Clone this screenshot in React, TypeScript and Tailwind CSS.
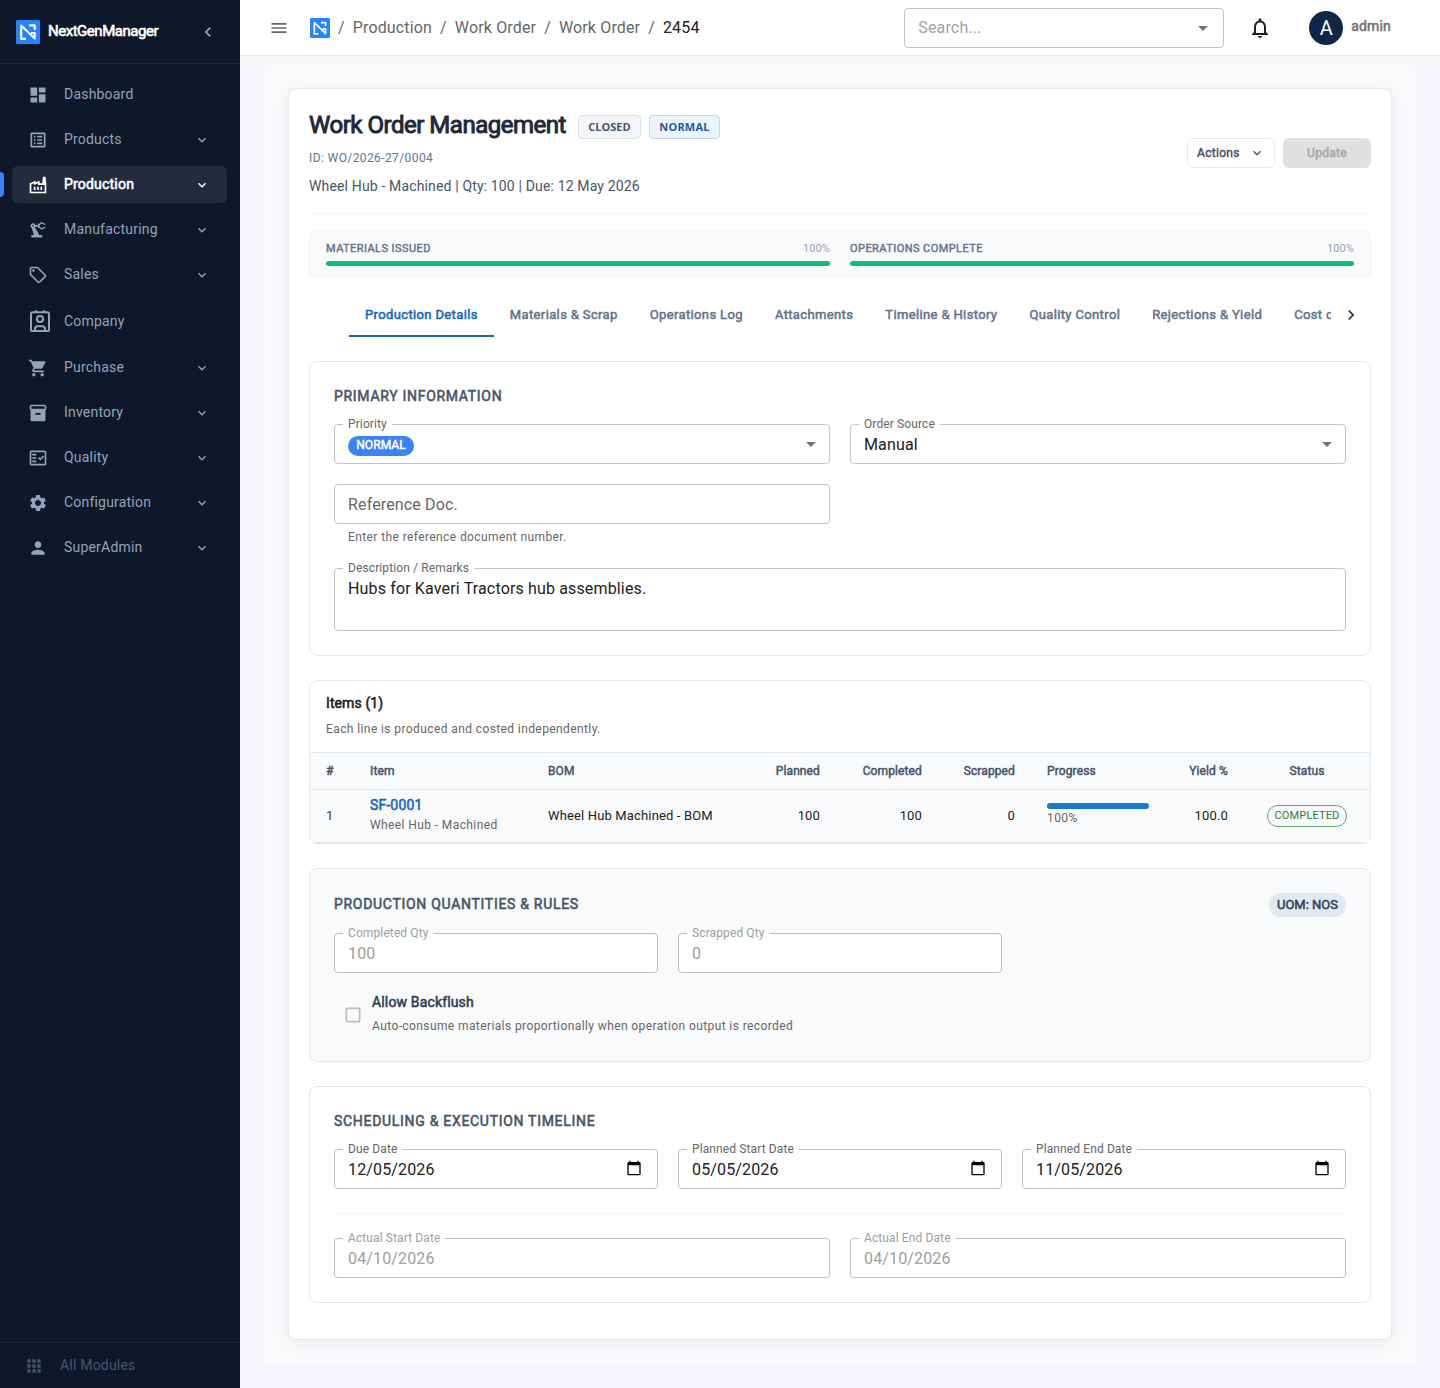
import React from "react";
import clsx from "clsx";
import type { IconType } from "react-icons";
import {
  MdApps,
  MdArrowDropDown,
  MdCalendarToday,
  MdCheckBoxOutlineBlank,
  MdChevronLeft,
  MdDashboard,
  MdInventory2,
  MdKeyboardArrowDown,
  MdKeyboardArrowRight,
  MdListAlt,
  MdMenu,
  MdNotificationsNone,
  MdOutlineFactCheck,
  MdOutlineFactory,
  MdOutlineLocalOffer,
  MdPerson,
  MdPrecisionManufacturing,
  MdSettings,
  MdShoppingCart,
} from "react-icons/md";

// heavier headings: the regular face thickened with a thin stroke
const bold = "[-webkit-text-stroke:0.04em_currentColor]";

function Logo({ size }: { size: number }) {
  return (
    <svg width={size} height={size} viewBox="0 0 24 24" className="shrink-0">
      <rect width="24" height="24" rx="1.5" fill="#2684ff" />
      <path
        d="M10 18.9H5.2V5.6L18.7 18.6V13H15.2M13.2 5.4h5.5V10"
        fill="none"
        stroke="#fff"
        strokeWidth="2.1"
        strokeLinejoin="round"
      />
    </svg>
  );
}

function CompanyIcon() {
  return (
    <svg
      width="24"
      height="24"
      viewBox="0 0 24 24"
      fill="none"
      stroke="currentColor"
      strokeWidth="2"
      className="shrink-0"
    >
      <rect x="3" y="3.3" width="18" height="18.7" rx="1.6" />
      <path d="M8 1.2v2.4M16 1.2v2.4" />
      <circle cx="12" cy="10" r="3.1" />
      <path d="M7 22v-2.2q0-2.6 2.6-2.6h4.8q2.6 0 2.6 2.6V22" />
    </svg>
  );
}

type NavItem = { label: string; icon?: IconType; expandable?: boolean; active?: boolean };

const navItems: NavItem[] = [
  { label: "Dashboard", icon: MdDashboard },
  { label: "Products", icon: MdListAlt, expandable: true },
  { label: "Production", icon: MdOutlineFactory, expandable: true, active: true },
  { label: "Manufacturing", icon: MdPrecisionManufacturing, expandable: true },
  { label: "Sales", icon: MdOutlineLocalOffer, expandable: true },
  { label: "Company" },
  { label: "Purchase", icon: MdShoppingCart, expandable: true },
  { label: "Inventory", icon: MdInventory2, expandable: true },
  { label: "Quality", icon: MdOutlineFactCheck, expandable: true },
  { label: "Configuration", icon: MdSettings, expandable: true },
  { label: "SuperAdmin", icon: MdPerson, expandable: true },
];

function Sidebar() {
  return (
    <aside className="flex w-60 shrink-0 flex-col bg-[#0f172a] text-[#94a3b8]">
      <div className="flex h-16 items-center border-b border-[#1b2436] pl-4 pr-[22px]">
        <Logo size={24} />
        <span className={clsx("ml-2 flex-1 text-[15px] tracking-[-0.47px] text-white", bold)}>
          NextGenManager
        </span>
        <MdChevronLeft size={20} />
      </div>
      <nav className="flex flex-1 flex-col gap-2 pt-3">
        {navItems.map(({ label, icon: Icon, expandable, active }) => (
          <div
            key={label}
            className={clsx(
              "relative ml-3 mr-[13px] flex items-center rounded-md pl-4 pr-[17px]",
              Icon ? "h-[37px]" : "h-10",
              active && "bg-[#242b3c] text-white"
            )}
          >
            {active && (
              <span className="absolute -left-3 top-1.5 h-[25px] w-1 rounded-r bg-[#3b82f6]" />
            )}
            <span className="flex w-9 items-center">
              {Icon ? <Icon size={20} /> : <CompanyIcon />}
            </span>
            <span
              className={clsx(
                "flex-1 text-sm tracking-[0.2px]",
                Icon && "pb-0.5",
                active && bold
              )}
            >
              {label}
            </span>
            {expandable && <MdKeyboardArrowDown size={16} />}
          </div>
        ))}
      </nav>
      <div className="flex h-[46px] items-center border-t border-[#1b2436] pl-6 text-[#475569]">
        <MdApps size={20} />
        <span className="ml-4 pb-0.5 text-sm tracking-[0.2px]">All Modules</span>
      </div>
    </aside>
  );
}

function Topbar() {
  const crumbs = ["Production", "Work Order", "Work Order"];
  return (
    <header className="flex h-14 items-center border-b border-[#e2e8f0] bg-white pl-[29px]">
      <MdMenu size={20} className="text-[#666]" />
      <div className="ml-[21px] flex flex-1 items-center gap-2 text-base tracking-[0.15px] text-[#666]">
        <Logo size={20} />
        {crumbs.map((crumb, i) => (
          <React.Fragment key={i}>
            <span>/</span>
            <span>{crumb}</span>
          </React.Fragment>
        ))}
        <span>/</span>
        <span className="text-[#212121]">2454</span>
      </div>
      <div className="flex h-10 w-80 items-center rounded border border-[#c4c4c4] pl-[13px] pr-2">
        <span className="flex-1 text-base tracking-[0.15px] text-[#a2a2a2]">Search...</span>
        <MdArrowDropDown size={24} className="text-[#757575]" />
      </div>
      <MdNotificationsNone size={24} className="ml-6 text-[#212121]" />
      <div className="ml-[37px] flex size-[34px] items-center justify-center rounded-full bg-[#0f2744] text-xl text-white">
        A
      </div>
      <span className={clsx("ml-2 mr-[49px] pb-[3px] text-sm tracking-[0.15px] text-[#757575]", bold)}>
        admin
      </span>
    </header>
  );
}

type FieldProps = {
  label?: string;
  disabled?: boolean;
  className?: string;
  children?: React.ReactNode;
  adornment?: React.ReactNode;
};

function Field({ label, disabled, className, children, adornment }: FieldProps) {
  return (
    <div
      className={clsx(
        "relative flex rounded bg-white px-3.5 text-base tracking-[0.15px]",
        disabled ? "text-[#9e9e9e]" : "text-[#212121]",
        className ?? "h-10 items-center"
      )}
    >
      <fieldset
        className={clsx(
          "absolute inset-x-0 bottom-0 rounded border px-2",
          disabled ? "border-[#bdbdbd]" : "border-[#c4c4c4]",
          label ? "-top-[5px]" : "top-0"
        )}
      >
        {label && (
          <legend
            className={clsx(
              "h-[11px] px-[5px] text-xs leading-[11px] tracking-[0.11px]",
              disabled ? "text-[#9e9e9e]" : "text-[#666]"
            )}
          >
            {label}
          </legend>
        )}
      </fieldset>
      <span className="flex-1 pt-0.5">{children}</span>
      {adornment}
    </div>
  );
}

const dropdown = <MdArrowDropDown size={24} className="-mr-[7px] text-[#757575]" />;
const calendar = <MdCalendarToday size={16} className="mr-0.5 -mt-0.5 text-black" />;

function SectionTitle({ children }: { children: React.ReactNode }) {
  return (
    <h2 className={clsx("pb-0.5 text-sm leading-5 tracking-[0.7px] text-[#475569]", bold)}>
      {children}
    </h2>
  );
}

function Meter({ label }: { label: string }) {
  return (
    <div className="flex-1">
      <div className="flex h-[18px] items-center justify-between pt-0.5 text-[11px]">
        <span className={clsx("tracking-[0.44px] text-[#64748b]", bold)}>{label}</span>
        <span className="tracking-[0.1px] text-[#94a3b8]">100%</span>
      </div>
      <div className="mt-1 h-[5px] rounded-full bg-[#10b981]" />
    </div>
  );
}

const tabs = [
  "Production Details",
  "Materials & Scrap",
  "Operations Log",
  "Attachments",
  "Timeline & History",
  "Quality Control",
  "Rejections & Yield",
  "Cost of Production",
];

function PageHeader() {
  return (
    <div className="flex items-center justify-between border-b border-[#f1f5f9] pb-[17px]">
      <div>
        <div className="flex h-9 items-center">
          <h1 className={clsx("text-2xl tracking-[-0.48px] text-[#1e293b]", bold)}>
            Work Order Management
          </h1>
          <span className="ml-3 mt-1 flex h-6 w-[63px] items-center justify-center rounded border border-[#dbe2ea] bg-[#f3f5f8] font-['Open_Sans'] text-[11px] font-bold text-[#475569]">
            CLOSED
          </span>
          <span className="ml-2 mt-1 flex h-6 w-[71px] items-center justify-center rounded border border-[#bfd7f0] bg-[#ebf3fc] font-['Open_Sans'] text-[11px] font-bold tracking-[0.2px] text-[#1e5a9c]">
            NORMAL
          </span>
        </div>
        <p className="mt-[5px] text-xs leading-5 tracking-[0.4px] text-[#64748b]">
          ID: WO/2026-27/0004
        </p>
        <p className="mt-2 text-sm leading-5 tracking-[0.15px] text-[#475569]">
          Wheel Hub - Machined | Qty: 100 | Due: 12 May 2026
        </p>
      </div>
      <div className="mt-0.5 flex gap-2 text-xs">
        <button className="flex h-[30px] w-[88px] items-center justify-between rounded-md border border-[#e2e8f0] px-[9px] text-[#475569]">
          <span className={clsx("tracking-[0.3px]", bold)}>Actions</span>
          <MdKeyboardArrowDown size={16} />
        </button>
        <button
          className={clsx("h-[30px] w-[88px] rounded-md bg-[#e0e0e0] tracking-[0.3px] text-[#a6a6a6]", bold)}
        >
          Update
        </button>
      </div>
    </div>
  );
}

function ItemsTable() {
  const th = "font-normal px-4";
  return (
    <section className="mt-6 overflow-hidden rounded-lg border border-[#e2e8f0]">
      <div className="h-[71px] px-4 pt-3">
        <h2 className={clsx("text-sm leading-5 tracking-[0.1px] text-[#212121]", bold)}>
          Items (1)
        </h2>
        <p className="mt-1.5 text-xs leading-5 tracking-[0.4px] text-[#666]">
          Each line is produced and costed independently.
        </p>
      </div>
      <table className="w-full table-fixed border-separate border-spacing-0 bg-[#f8fafc]">
        <colgroup>
          <col className="w-11" />
          <col className="w-[178px]" />
          <col className="w-[208px]" />
          <col className="w-24" />
          <col className="w-[102px]" />
          <col className="w-[93px]" />
          <col className="w-[134px]" />
          <col className="w-[79px]" />
          <col className="w-[126px]" />
        </colgroup>
        <thead>
          <tr
            className={clsx(
              "h-[38px] text-left text-xs tracking-[0.12px] text-[#475569] [&>th]:border-y [&>th]:border-[#e2e8f0]",
              bold
            )}
          >
            <th className={th}>#</th>
            <th className={th}>Item</th>
            <th className={th}>BOM</th>
            <th className={clsx(th, "text-right")}>Planned</th>
            <th className={clsx(th, "text-right")}>Completed</th>
            <th className={clsx(th, "text-right")}>Scrapped</th>
            <th className={th}>Progress</th>
            <th className={clsx(th, "text-right")}>Yield %</th>
            <th className={clsx(th, "text-center")}>Status</th>
          </tr>
        </thead>
        <tbody>
          <tr className="h-[53px] text-[13px] tracking-[0.15px] text-[#212121] [&>td]:border-b [&>td]:border-[#e2e8f0]">
            <td className="px-4 text-[#334155]">1</td>
            <td className="px-4 pb-0.5">
              <div className={clsx("text-sm leading-5 tracking-[0.15px] text-[#1565c0]", bold)}>
                SF-0001
              </div>
              <div className="text-xs leading-5 tracking-[0.4px] text-[#666]">
                Wheel Hub - Machined
              </div>
            </td>
            <td className="px-4">Wheel Hub Machined - BOM</td>
            <td className="px-4 text-right">100</td>
            <td className="px-4 text-right">100</td>
            <td className="px-4 text-right">0</td>
            <td className="px-4 pb-0.5">
              <div className="h-1.5 rounded-full bg-[#1976d2]" />
              <div className="text-xs leading-[19px] tracking-[0.4px] text-[#666]">100%</div>
            </td>
            <td className="px-4 text-right">100.0</td>
            <td className="text-center">
              <span className="inline-flex h-[22px] w-20 items-center justify-center rounded-full border border-[#6aa56d] align-middle text-[11px] text-[#2e7d32]">
                COMPLETED
              </span>
            </td>
          </tr>
        </tbody>
      </table>
    </section>
  );
}

export default function App() {
  return (
    <div className="flex h-[1388px] w-[1440px] bg-[#f4f6fa] font-[Roboto,sans-serif] leading-normal">
      <Sidebar />
      <div className="flex-1">
        <Topbar />
        <main className="mx-6 mt-2 h-[1300px] rounded-lg bg-[#f8fafc] p-6">
          <div className="h-[1252px] rounded-lg border border-[#e2e8f0] bg-white px-5 pt-[18px] shadow-[0_4px_20px_rgba(15,39,68,0.06)]">
            <PageHeader />

            <div className="mt-4 flex h-[47px] gap-5 rounded-md border border-[#f1f5f9] bg-[#f8fafc] px-4 pt-2">
              <Meter label="MATERIALS ISSUED" />
              <Meter label="OPERATIONS COMPLETE" />
            </div>

            <div className="mt-4 flex h-11 pl-10">
              <div className="flex flex-1 overflow-hidden">
                {tabs.map((tab, i) => (
                  <div
                    key={tab}
                    className={clsx(
                      "flex shrink-0 items-center border-b-2 px-4 pt-0.5 text-[13px] tracking-[0.367px]",
                      bold,
                      i === 0 ? "border-[#1565c0] text-[#1565c0]" : "border-transparent text-[#64748b]"
                    )}
                  >
                    {tab}
                  </div>
                ))}
              </div>
              <div className="flex w-10 items-center justify-center text-[#333]">
                <MdKeyboardArrowRight size={20} />
              </div>
            </div>

            <section className="mt-6 h-[295px] rounded-lg border border-[#e2e8f0] p-6">
              <SectionTitle>PRIMARY INFORMATION</SectionTitle>
              <div className="mt-4 grid grid-cols-2 gap-5">
                <Field label="Priority" adornment={dropdown}>
                  <span
                    className={clsx(
                      "mt-0.5 flex h-5 w-[66px] items-center justify-center rounded-full bg-[#3b82f6] pb-0.5 text-xs tracking-[0.1px] text-white",
                      bold
                    )}
                  >
                    NORMAL
                  </span>
                </Field>
                <Field label="Order Source" adornment={dropdown}>
                  Manual
                </Field>
                <div>
                  <Field>
                    <span className="text-[#666]">Reference Doc.</span>
                  </Field>
                  <p className="ml-3.5 mt-[3px] text-xs leading-[21px] tracking-[0.4px] text-[#666]">
                    Enter the reference document number.
                  </p>
                </div>
              </div>
              <div className="mt-5">
                <Field label="Description / Remarks" className="h-[63px] items-start pt-[7px]">
                  Hubs for Kaveri Tractors hub assemblies.
                </Field>
              </div>
            </section>

            <ItemsTable />

            <section className="mt-6 h-[194px] rounded-lg border border-[#e2e8f0] bg-[#f8fafc] p-6">
              <div className="flex h-6 items-center justify-between">
                <SectionTitle>PRODUCTION QUANTITIES &amp; RULES</SectionTitle>
                <span
                  className={clsx(
                    "flex h-6 w-[77px] items-center justify-center rounded-full bg-[#e2e8f0] text-[13px] text-[#334155]",
                    bold
                  )}
                >
                  UOM: NOS
                </span>
              </div>
              <div className="mt-4 grid grid-cols-3 gap-5">
                <Field label="Completed Qty" disabled>
                  100
                </Field>
                <Field label="Scrapped Qty" disabled>
                  0
                </Field>
              </div>
              <div className="mt-[18px] flex items-center pl-[9px]">
                <MdCheckBoxOutlineBlank size={20} className="mt-[3px] text-[#bdbdbd]" />
                <div className="ml-[9px]">
                  <div className={clsx("text-sm leading-[22px] tracking-[0.15px] text-[#334155]", bold)}>
                    Allow Backflush
                  </div>
                  <div className="mt-[3px] text-xs leading-5 tracking-[0.4px] text-[#666]">
                    Auto-consume materials proportionally when operation output is recorded
                  </div>
                </div>
              </div>
            </section>

            <section className="mt-6 h-[217px] rounded-lg border border-[#e2e8f0] p-6">
              <SectionTitle>SCHEDULING &amp; EXECUTION TIMELINE</SectionTitle>
              <div className="mt-4 grid grid-cols-3 gap-5">
                <Field label="Due Date" adornment={calendar}>
                  12/05/2026
                </Field>
                <Field label="Planned Start Date" adornment={calendar}>
                  05/05/2026
                </Field>
                <Field label="Planned End Date" adornment={calendar}>
                  11/05/2026
                </Field>
              </div>
              <div className="my-6 h-px bg-[#f1f5f9]" />
              <div className="grid grid-cols-2 gap-5">
                <Field label="Actual Start Date" disabled>
                  04/10/2026
                </Field>
                <Field label="Actual End Date" disabled>
                  04/10/2026
                </Field>
              </div>
            </section>
          </div>
        </main>
      </div>
    </div>
  );
}
